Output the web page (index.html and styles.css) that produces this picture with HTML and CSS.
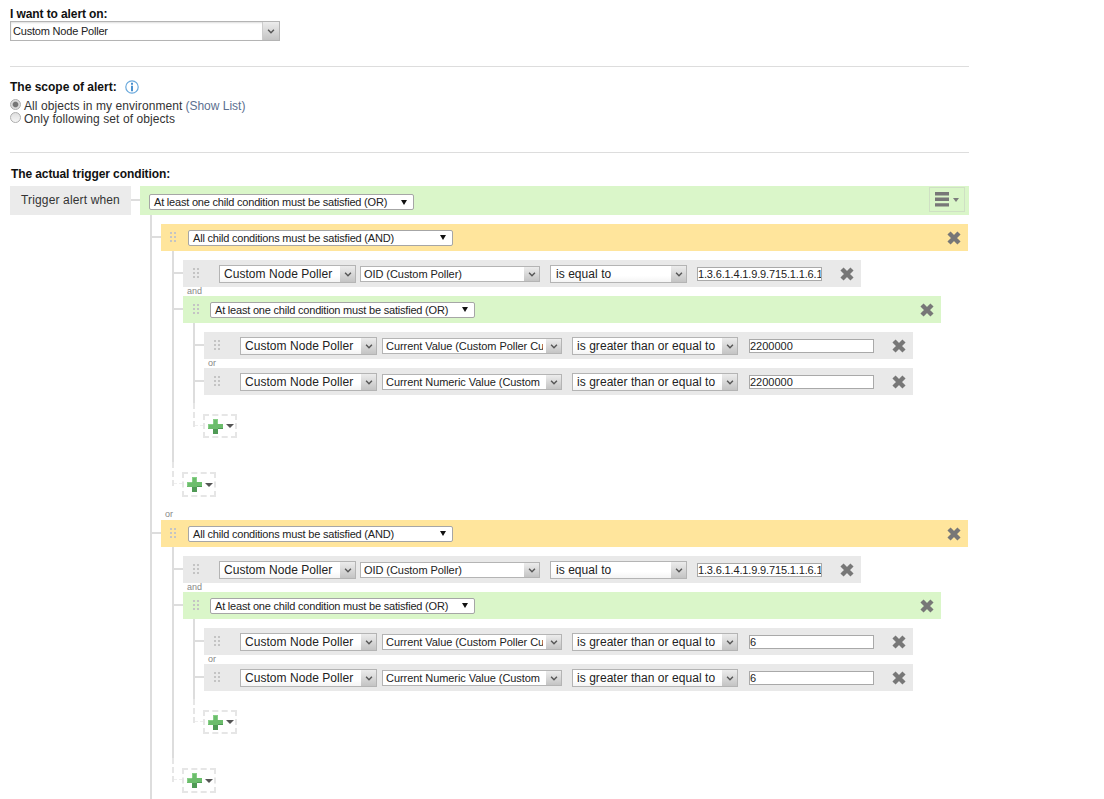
FILE: index.html
```html
<!DOCTYPE html>
<html lang="en">
<head>
<meta charset="utf-8">
<title>Alert trigger condition</title>
<link rel="stylesheet" href="styles.css">
</head>
<body>
<svg class="defs" width="0" height="0" aria-hidden="true">
  <defs>
    <symbol id="x" viewBox="0 0 14 14">
      <path d="M2 2 12 12M12 2 2 12" fill="none" stroke="#777" stroke-width="4.4"/>
    </symbol>
    <symbol id="grip" viewBox="0 0 6 10">
      <path d="M0 0h2v2H0zM4 0h2v2H4zM0 4h2v2H0zM4 4h2v2H4zM0 8h2v2H0zM4 8h2v2H4z" fill="#c4c4c4"/>
    </symbol>
    <symbol id="chev" viewBox="0 0 9 6">
      <path d="M1 1 4.5 4.5 8 1" fill="none" stroke="#555" stroke-width="1.7"/>
    </symbol>
    <symbol id="plus" viewBox="0 0 15 15">
      <path d="M5 0h5v5h5v5h-5v5H5v-5H0V5h5z" fill="#6cbd6c"/>
      <path d="M5 0h5v5h-1V1H6v4H5zM0 5h5v1H1v3H0z" fill="#86cf86"/>
      <path d="M5 10h5v5H5zM10 9h5v1h-5z" fill="#4f9a55"/>
    </symbol>
  </defs>
</svg>

<main class="page">
  <section class="block">
    <h2 class="label label-tight">I want to alert on:</h2>
    <div class="combo combo-main"><span class="combo-text">Custom Node Poller</span><span class="combo-btn"><svg class="chev"><use href="#chev"/></svg></span></div>
  </section>

  <hr class="rule rule-one">

  <section class="block">
    <h2 class="label">The scope of alert:
      <svg class="info" viewBox="0 0 14 14"><circle cx="7" cy="7" r="6.2" fill="#fff" stroke="#6aa9dc" stroke-width="1.2"/><path d="M6 2.8h2v2H6zM6 5.8h2v5.4H6z" fill="#4a90cf"/></svg>
    </h2>
    <div class="radio-row"><span class="radio radio-on"></span>All objects in my environment <a class="link">(Show List)</a></div>
    <div class="radio-row"><span class="radio"></span>Only following set of objects</div>
  </section>

  <hr class="rule rule-two">

  <section class="block">
    <h2 class="label label-tight label-trigger">The actual trigger condition:</h2>
    <div class="trigger">
      <div class="trigger-label">Trigger alert when</div>
      <div class="tree">
        <div class="bar bar-green bar-root">
          <div class="pick pick-a"><span>At least one child condition must be satisfied (OR)</span><i class="tri"></i></div>
          <button class="menu-btn" type="button"><svg class="menu-ico" viewBox="0 0 14 15"><path d="M0 0h14v3.4H0zM0 5.6h14V9H0zM0 11.2h14v3.4H0z" fill="#777"/></svg><i class="tri tri-small"></i></button>
        </div>
        <div class="kids kids-root">

          <div class="node">
            <div class="bar bar-orange bar-l1">
              <svg class="grip"><use href="#grip"/></svg>
              <div class="pick pick-b"><span>All child conditions must be satisfied (AND)</span><i class="tri"></i></div>
              <svg class="close close-end"><use href="#x"/></svg>
            </div>
            <div class="kids kids-l2">
              <div class="node">
                <div class="row row-l2">
                  <svg class="grip grip-row"><use href="#grip"/></svg>
                  <div class="combo combo-obj"><span class="combo-text">Custom Node Poller</span><span class="combo-btn"><svg class="chev"><use href="#chev"/></svg></span></div>
                  <div class="combo combo-field-a"><span class="combo-text">OID (Custom Poller)</span><span class="combo-btn"><svg class="chev"><use href="#chev"/></svg></span></div>
                  <div class="combo combo-op-a"><span class="combo-text">is equal to</span><span class="combo-btn"><svg class="chev"><use href="#chev"/></svg></span></div>
                  <input class="value value-oid" value="1.3.6.1.4.1.9.9.715.1.1.6.1.14">
                  <svg class="close close-row"><use href="#x"/></svg>
                </div>
              </div>
              <div class="join">and</div>
              <div class="node">
                <div class="bar bar-green bar-l2">
                  <svg class="grip"><use href="#grip"/></svg>
                  <div class="pick pick-c"><span>At least one child condition must be satisfied (OR)</span><i class="tri"></i></div>
                  <svg class="close close-end"><use href="#x"/></svg>
                </div>
                <div class="kids kids-l3">
                  <div class="node">
                    <div class="row row-l3">
                      <svg class="grip grip-row"><use href="#grip"/></svg>
                      <div class="combo combo-obj"><span class="combo-text">Custom Node Poller</span><span class="combo-btn"><svg class="chev"><use href="#chev"/></svg></span></div>
                      <div class="combo combo-field-b"><span class="combo-text">Current Value (Custom Poller Current Value)</span><span class="combo-btn"><svg class="chev"><use href="#chev"/></svg></span></div>
                      <div class="combo combo-op-b"><span class="combo-text">is greater than or equal to</span><span class="combo-btn"><svg class="chev"><use href="#chev"/></svg></span></div>
                      <input class="value value-num" value="2200000">
                      <svg class="close close-row"><use href="#x"/></svg>
                    </div>
                  </div>
                  <div class="join">or</div>
                  <div class="node">
                    <div class="row row-l3">
                      <svg class="grip grip-row"><use href="#grip"/></svg>
                      <div class="combo combo-obj"><span class="combo-text">Custom Node Poller</span><span class="combo-btn"><svg class="chev"><use href="#chev"/></svg></span></div>
                      <div class="combo combo-field-b"><span class="combo-text">Current Numeric Value (Custom Poller)</span><span class="combo-btn"><svg class="chev"><use href="#chev"/></svg></span></div>
                      <div class="combo combo-op-b"><span class="combo-text">is greater than or equal to</span><span class="combo-btn"><svg class="chev"><use href="#chev"/></svg></span></div>
                      <input class="value value-num" value="2200000">
                      <svg class="close close-row"><use href="#x"/></svg>
                    </div>
                  </div>
                </div>
                <div class="add add-inner"><svg class="plus"><use href="#plus"/></svg><i class="tri tri-small"></i></div>
              </div>
            </div>
            <div class="add add-outer"><svg class="plus"><use href="#plus"/></svg><i class="tri tri-small"></i></div>
          </div>

          <div class="join join-top">or</div>

          <div class="node">
            <div class="bar bar-orange bar-l1">
              <svg class="grip"><use href="#grip"/></svg>
              <div class="pick pick-b"><span>All child conditions must be satisfied (AND)</span><i class="tri"></i></div>
              <svg class="close close-end"><use href="#x"/></svg>
            </div>
            <div class="kids kids-l2">
              <div class="node">
                <div class="row row-l2">
                  <svg class="grip grip-row"><use href="#grip"/></svg>
                  <div class="combo combo-obj"><span class="combo-text">Custom Node Poller</span><span class="combo-btn"><svg class="chev"><use href="#chev"/></svg></span></div>
                  <div class="combo combo-field-a"><span class="combo-text">OID (Custom Poller)</span><span class="combo-btn"><svg class="chev"><use href="#chev"/></svg></span></div>
                  <div class="combo combo-op-a"><span class="combo-text">is equal to</span><span class="combo-btn"><svg class="chev"><use href="#chev"/></svg></span></div>
                  <input class="value value-oid" value="1.3.6.1.4.1.9.9.715.1.1.6.1.14">
                  <svg class="close close-row"><use href="#x"/></svg>
                </div>
              </div>
              <div class="join">and</div>
              <div class="node">
                <div class="bar bar-green bar-l2">
                  <svg class="grip"><use href="#grip"/></svg>
                  <div class="pick pick-c"><span>At least one child condition must be satisfied (OR)</span><i class="tri"></i></div>
                  <svg class="close close-end"><use href="#x"/></svg>
                </div>
                <div class="kids kids-l3">
                  <div class="node">
                    <div class="row row-l3">
                      <svg class="grip grip-row"><use href="#grip"/></svg>
                      <div class="combo combo-obj"><span class="combo-text">Custom Node Poller</span><span class="combo-btn"><svg class="chev"><use href="#chev"/></svg></span></div>
                      <div class="combo combo-field-b"><span class="combo-text">Current Value (Custom Poller Current Value)</span><span class="combo-btn"><svg class="chev"><use href="#chev"/></svg></span></div>
                      <div class="combo combo-op-b"><span class="combo-text">is greater than or equal to</span><span class="combo-btn"><svg class="chev"><use href="#chev"/></svg></span></div>
                      <input class="value value-num" value="6">
                      <svg class="close close-row"><use href="#x"/></svg>
                    </div>
                  </div>
                  <div class="join">or</div>
                  <div class="node">
                    <div class="row row-l3">
                      <svg class="grip grip-row"><use href="#grip"/></svg>
                      <div class="combo combo-obj"><span class="combo-text">Custom Node Poller</span><span class="combo-btn"><svg class="chev"><use href="#chev"/></svg></span></div>
                      <div class="combo combo-field-b"><span class="combo-text">Current Numeric Value (Custom Poller)</span><span class="combo-btn"><svg class="chev"><use href="#chev"/></svg></span></div>
                      <div class="combo combo-op-b"><span class="combo-text">is greater than or equal to</span><span class="combo-btn"><svg class="chev"><use href="#chev"/></svg></span></div>
                      <input class="value value-num" value="6">
                      <svg class="close close-row"><use href="#x"/></svg>
                    </div>
                  </div>
                </div>
                <div class="add add-inner"><svg class="plus"><use href="#plus"/></svg><i class="tri tri-small"></i></div>
              </div>
            </div>
            <div class="add add-outer"><svg class="plus"><use href="#plus"/></svg><i class="tri tri-small"></i></div>
          </div>

        </div>
      </div>
    </div>
  </section>
</main>
</body>
</html>
```

FILE: styles.css
```css
* { box-sizing: border-box; }
html, body { margin: 0; height: 799px; overflow: hidden; background: #fff; }
body { font-family: "Liberation Sans", Arial, sans-serif; font-size: 12px; color: #222; }
.defs { display: block; height: 0; }
.page { width: 959px; margin-left: 10px; padding-top: 8px; }

.label { margin: 0; font-size: 12px; line-height: 13px; font-weight: bold; color: #111; }
.label-tight { letter-spacing: -0.1px; }
.label-trigger { margin-left: 1px; margin-bottom: 5px; }
.info { width: 14px; height: 14px; margin-left: 5px; vertical-align: -3px; }
.rule { border: 0; height: 1px; background: #ddd; margin: 0; }
.rule-one { margin-top: 25px; margin-bottom: 13px; }
.rule-two { margin-top: 27px; margin-bottom: 15px; }

.radio-row { display: flex; align-items: center; height: 13px; color: #333; letter-spacing: 0.08px; }
.radio-row:first-of-type { margin-top: 5px; }
.radio { width: 11px; height: 11px; border-radius: 50%; margin: 0 3px 2px 0; border: 1px solid #adadad; background: linear-gradient(#dedede, #f6f6f6); flex: none; }
.radio-on { background: radial-gradient(circle, #757575 0, #757575 2.2px, #dcdcdc 3.4px); }
.link { color: #5c6f8f; margin-left: 3px; letter-spacing: 0; }

.combo { display: flex; align-items: stretch; background: #fff; border: 1px solid #b4b4b4; color: #222; overflow: hidden; flex: none; }
.combo-text { flex: 1; min-width: 0; white-space: nowrap; overflow: hidden; }
.combo-btn { flex: none; width: 15px; display: flex; align-items: center; justify-content: center; background: linear-gradient(#ececec, #c4c4c4); }
.chev { width: 8px; height: 5px; }
.combo-main { width: 270px; height: 20px; font-size: 11px; line-height: 18px; letter-spacing: -0.2px; box-shadow: inset 0 1px 2px #ddd; }
.combo-main .combo-text { padding-left: 2px; }
.combo-main .combo-btn { width: 17px; border-left: 1px solid #ccc; }

.trigger { display: flex; align-items: flex-start; }
.trigger-label { width: 121px; height: 29px; margin-right: 9px; background: #ebebeb; text-align: center; line-height: 29px; color: #333; letter-spacing: 0.14px; position: relative; }
.trigger-label::after { content: ""; position: absolute; left: 100%; top: 13px; width: 9px; height: 2px; background: #ddd; }
.tree { width: 829px; }

.bar { display: flex; align-items: center; position: relative; }
.bar-green { background: #daf6c9; }
.bar-orange { background: #ffe59c; }
.bar-root { height: 29px; width: 829px; padding-left: 9px; }
.bar-l1 { height: 27px; width: 807px; padding-left: 9px; }
.bar-l2 { height: 27px; width: 758px; padding-left: 10px; }

.grip { width: 6px; height: 10px; flex: none; }
.bar .grip { margin-top: -1px; margin-right: 12px; }
.bar-l2 .grip { margin-right: 11px; }

.pick { display: flex; align-items: center; justify-content: space-between; width: 265px; height: 16px; padding: 0 6px 0 4px; background: #fff; border: 1px solid #a6a6a6; border-radius: 2px; font-size: 11px; letter-spacing: -0.2px; color: #222; white-space: nowrap; }
.pick-a { margin-top: 3px; }
.tri { display: block; width: 0; height: 0; border-left: 3.5px solid transparent; border-right: 3.5px solid transparent; border-top: 5px solid #111; }
.tri-small { border-left-width: 4px; border-right-width: 4px; border-top: 4px solid #555; }

.menu-btn { position: absolute; right: 4px; top: 1px; width: 36px; height: 25px; padding: 0 0 0 5px; display: flex; align-items: center; gap: 4px; background: transparent; border: 1px solid #cfe0c4; }
.menu-btn .tri-small { border-left-width: 3.5px; border-right-width: 3.5px; border-top-color: #7c7c7c; }
.menu-ico { width: 14px; height: 15px; }
.close { width: 14px; height: 14px; flex: none; }
.close-end { margin-left: auto; margin-right: 7px; }

.kids { margin-left: 10px; padding-left: 9px; border-left: 2px solid #ddd; position: relative; padding-top: 9px; padding-bottom: 24px; }
.kids-root { padding-bottom: 30px; }
.kids-l2 { margin-left: 11px; }
.kids-l3 { padding-bottom: 8px; }
.node { position: relative; }
.node::before { content: ""; position: absolute; left: -9px; top: 12px; width: 9px; height: 2px; background: #ddd; }

.row { display: flex; align-items: center; height: 27px; background: #e9e9e9; padding-left: 10px; }
.row-l2 { width: 678px; }
.row-l3 { width: 709px; }
.grip-row { margin-top: -1px; margin-right: 20px; }
.row .combo { height: 18px; margin-top: 1px; font-size: 12px; line-height: 16px; letter-spacing: 0.05px; }
.row .combo-text { padding-left: 4px; background: linear-gradient(#fff 60%, #f4f4f4); }
.combo-obj { width: 137px; margin-right: 5px; }
.row-l2 .combo-obj { margin-right: 4px; }
.combo-field-a { width: 180px; margin-right: 10px; }
.combo-op-a { width: 137px; margin-right: 10px; }
.combo-field-b { width: 180px; margin-right: 10px; }
.combo-op-b { width: 166px; margin-right: 11px; }
.row .combo-field-a, .row .combo-field-b { height: 16px; font-size: 11px; line-height: 14px; letter-spacing: -0.06px; }
.row .combo-field-a .combo-text, .row .combo-field-b .combo-text { padding-left: 3px; margin-right: 3px; background: #fff; }
.row .combo-op-a .combo-text { padding-left: 5px; }
.value { height: 14px; margin: 1px 18px 0 0; padding: 0; border: 1px solid #a9a9a9; background: #fff; font: 11px/12px "Liberation Sans", Arial, sans-serif; color: #222; outline: 0; }
.value-oid { width: 125px; letter-spacing: -0.15px; }
.value-num { width: 125px; }

.join { height: 9px; line-height: 9px; font-size: 9px; color: #888; padding-left: 4px; }
.join-top { height: 23px; padding: 13px 0 0 4px; }

.add { position: relative; width: 34px; height: 25px; border: 2px dashed #e6e6e6; display: flex; align-items: center; padding-left: 3px; gap: 3px; }
.add::before { content: ""; position: absolute; left: -12px; top: -12px; height: 24px; border-left: 2px dashed #e6e6e6; }
.add::after { content: ""; position: absolute; left: -10px; top: 9px; width: 8px; height: 0; border-top: 1px dashed #eee; }
.plus { width: 15px; height: 15px; }
.add-inner { margin: 11px 0 0 20px; height: 24px; }
.add-inner::before { top: -13px; }
.add-outer { margin: 10px 0 0 21px; }
```
